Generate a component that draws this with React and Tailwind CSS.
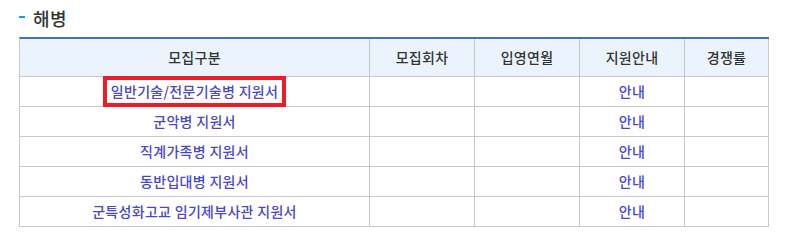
import React from "react";

const font = { fontFamily: '"Noto Sans CJK KR", "Noto Sans", sans-serif' };

const rows = [
  { name: "일반기술/전문기술병 지원서", boxed: true },
  { name: "군악병 지원서" },
  { name: "직계가족병 지원서" },
  { name: "동반입대병 지원서" },
  { name: "군특성화고교 임기제부사관 지원서" },
];

export default function App() {
  return (
    <div className="w-[793px] h-[240px] bg-white pl-[19px]" style={font}>
      <div className="flex items-center h-[37px] pb-[1px]">
        <span className="w-[6px] h-[2px] bg-[#1a9be0] mr-[8px] mt-[-3px]" />
        <span className="text-[18px] font-medium text-[#333333] leading-none tracking-[0.5px]">해병</span>
      </div>
      <div className="w-[750px] border-l border-[#c8c8c8] border-t-2 border-t-[#4470c0] grid grid-cols-[350px_105px_105px_105px_84px] text-[14px] font-medium tracking-[0.3px]">
        {["모집구분", "모집회차", "입영연월", "지원안내", "경쟁률"].map((h) => (
          <div
            key={h}
            className="h-[38px] bg-[#ebf3fd] border-r border-b border-[#c8c8c8] flex items-center justify-center text-[#333333]"
          >
            {h}
          </div>
        ))}
        {rows.map((r) => (
          <React.Fragment key={r.name}>
            <div className="h-[30px] border-r border-b border-[#c8c8c8] flex items-center justify-center text-[#4848cc]">
              {r.boxed ? (
                <span className="shrink-0 w-[183px] h-[31px] mt-[-1px] border-4 border-[#ee1c25] flex items-center justify-center">
                  {r.name}
                </span>
              ) : (
                r.name
              )}
            </div>
            <div className="h-[30px] border-r border-b border-[#c8c8c8]" />
            <div className="h-[30px] border-r border-b border-[#c8c8c8]" />
            <div className="h-[30px] border-r border-b border-[#c8c8c8] flex items-center justify-center text-[#4848cc]">
              안내
            </div>
            <div className="h-[30px] border-r border-b border-[#c8c8c8]" />
          </React.Fragment>
        ))}
      </div>
    </div>
  );
}
